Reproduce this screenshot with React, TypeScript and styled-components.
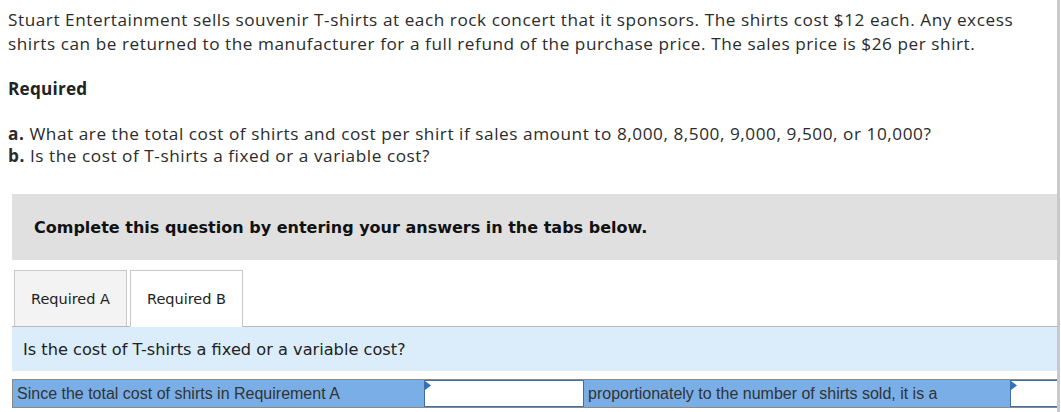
import React from 'react';
import styled, { createGlobalStyle } from 'styled-components';

const GlobalStyle = createGlobalStyle`
  html, body {
    margin: 0;
    padding: 0;
    background: #ffffff;
  }
  body {
    font-family: "Open Sans", Arial, sans-serif;
    color: #222;
  }
`;

const Page = styled.div`
  width: 1061px;
  min-height: 412px;
  overflow: hidden;
  display: flex;
`;

const Main = styled.div`
  width: 1057px;
  flex-shrink: 0;
`;

const EdgeLine = styled.div`
  width: 3px;
  background: #c9c9c9;
`;

const Intro = styled.div`
  padding: 8px 0 0 8px;
  font-family: "Open Sans", Arial, sans-serif;
  font-size: 17.2px;
  letter-spacing: 0.55px;
  line-height: 24px;
  color: #2b2b2b;
`;

const Para = styled.p`
  margin: 0;
`;

const RequiredTitle = styled.h3`
  margin: 21px 0 0;
  font-size: 17.2px;
  font-weight: 700;
  letter-spacing: 0.2px;
  line-height: 24px;
  color: #222;
`;

const Questions = styled.div`
  margin-top: 22px;
  line-height: 22px;
`;

const Label = styled.b`
  font-weight: 700;
`;

const Instruction = styled.div`
  margin: 27px 0 0 12px;
  height: 66px;
  background: #e0e0e0;
  display: flex;
  align-items: center;
  padding-left: 22px;
  font-family: "DejaVu Sans", Verdana, sans-serif;
  font-weight: 700;
  font-size: 16px;
  color: #111;
`;

const TabBar = styled.div`
  margin: 10px 0 0 12px;
  display: flex;
  align-items: flex-end;
  gap: 3px;
  padding-left: 2px;
  border-bottom: 1px solid #b8b8b8;
`;

const Tab = styled.div<{ $active?: boolean }>`
  width: 113px;
  box-sizing: border-box;
  display: flex;
  align-items: center;
  justify-content: center;
  border: 1px solid #c8c8c8;
  border-bottom: none;
  background: ${p => (p.$active ? '#ffffff' : '#f3f3f3')};
  margin-bottom: ${p => (p.$active ? '-1px' : '0')};
  height: ${p => (p.$active ? '57px' : '56px')};
  font-family: "DejaVu Sans", Verdana, sans-serif;
  font-size: 14.5px;
  color: #222;
`;

const QuestionPanel = styled.div`
  margin-left: 12px;
  height: 44px;
  background: #dbedfa;
  display: flex;
  align-items: center;
  padding-left: 11px;
  font-family: "DejaVu Sans", Verdana, sans-serif;
  font-size: 16.2px;
  color: #222;
`;

const AnswerRow = styled.div`
  margin: 8px 0 0 12px;
  height: 29px;
  box-sizing: border-box;
  background: #7aaee6;
  border: 1px solid #8a8a8a;
  border-right: none;
  display: flex;
  align-items: stretch;
  overflow: hidden;
  font-family: "Liberation Sans", Arial, sans-serif;
  font-size: 16px;
  color: #333;
`;

const RowText = styled.div<{ $w: number }>`
  width: ${p => p.$w}px;
  flex-shrink: 0;
  display: flex;
  align-items: center;
  padding-left: 4px;
  box-sizing: border-box;
  white-space: nowrap;
`;

const Select = styled.div<{ $w?: number }>`
  position: relative;
  width: ${p => (p.$w ? `${p.$w}px` : 'auto')};
  flex: ${p => (p.$w ? '0 0 auto' : '1 1 auto')};
  background: #ffffff;
  border: 1px solid #3f6ea8;
  border-right: ${p => (p.$w ? '1px solid #3f6ea8' : 'none')};
  box-sizing: border-box;
`;

const Marker = styled.svg`
  position: absolute;
  top: 0;
  left: 0;
`;

const Dropdown = ({ w }: { w?: number }) => (
  <Select $w={w}>
    <Marker width="7" height="9" viewBox="0 0 7 9">
      <path d="M0 0 L6 4.5 L0 9 Z" fill="#2f6fc4" />
    </Marker>
  </Select>
);

export default function App() {
  return (
    <Page>
      <GlobalStyle />
      <Main>
        <Intro>
          <Para>
            Stuart Entertainment sells souvenir T-shirts at each rock concert that it sponsors. The shirts cost $12 each. Any excess
            shirts can be returned to the manufacturer for a full refund of the purchase price. The sales price is $26 per shirt.
          </Para>
          <RequiredTitle>Required</RequiredTitle>
          <Questions>
            <Para>
              <Label>a.</Label> What are the total cost of shirts and cost per shirt if sales amount to 8,000, 8,500, 9,000, 9,500, or 10,000?
            </Para>
            <Para>
              <Label>b.</Label> Is the cost of T-shirts a fixed or a variable cost?
            </Para>
          </Questions>
        </Intro>
        <Instruction>Complete this question by entering your answers in the tabs below.</Instruction>
        <TabBar>
          <Tab>Required A</Tab>
          <Tab $active>Required B</Tab>
        </TabBar>
        <QuestionPanel>Is the cost of T-shirts a fixed or a variable cost?</QuestionPanel>
        <AnswerRow>
          <RowText $w={411}>Since the total cost of shirts in Requirement A</RowText>
          <Dropdown w={160} />
          <RowText $w={426}>proportionately to the number of shirts sold, it is a</RowText>
          <Dropdown />
        </AnswerRow>
      </Main>
      <EdgeLine />
    </Page>
  );
}
